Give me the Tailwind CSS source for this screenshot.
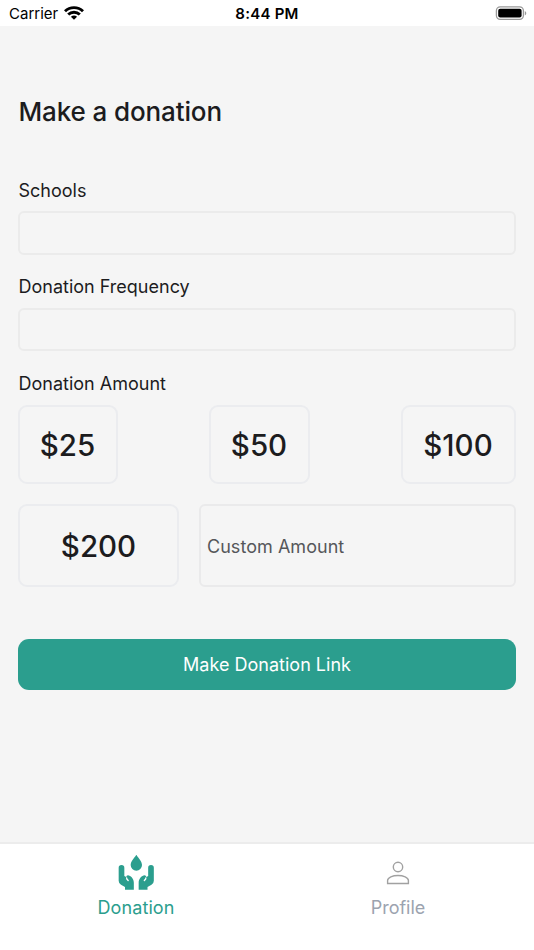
<!DOCTYPE html>
<html lang="en">
<head>
<meta charset="utf-8">
<title>Make a donation</title>
<script src="https://cdn.jsdelivr.net/npm/@tailwindcss/browser@4"></script>
</head>
<body class="bg-[#f5f5f5]">
<div class="flex h-[950px] w-[534px] flex-col overflow-hidden bg-[#f5f5f5] font-['Inter',sans-serif] text-[#1c1c1e]">
  <header class="grid h-[26px] shrink-0 grid-cols-3 items-center bg-white pl-[9px] pr-[7px] text-[15px] leading-[26px] text-black">
    <div class="flex items-center gap-[6px]">
      <span class="pt-px tracking-[0px]">Carrier</span>
      <svg class="mb-px h-[14px] w-5" viewBox="0 0 20 14" fill="none" stroke="#000" stroke-width="2.9"><path d="M1 5.2a13 13 0 0 1 18 0M4.2 8.5a8.4 8.4 0 0 1 11.6 0"/><path d="M10 13.8 6.9 10.8a4.6 4.6 0 0 1 6.2 0z" fill="#000" stroke="none"/></svg>
    </div>
    <div class="pr-[2px] pt-px text-center font-semibold tracking-[0.25px]">8:44 PM</div>
    <svg class="mb-px h-[14px] w-[32px] justify-self-end" viewBox="0 0 32 14"><rect x="1.4" y=".9" width="27" height="12.4" rx="3.8" fill="none" stroke="#999" stroke-width="1.3"/><rect x="3.2" y="2.7" width="23.4" height="8.8" rx="2" fill="#000"/><path d="M29.8 5v4.4c2-.8 2-3.6 0-4.4z" fill="#999"/></svg>
  </header>
  <main class="flex flex-1 flex-col px-[18px] pt-[65px] text-[18px]">
    <h1 class="h-10 pl-[0.5px] pt-px text-[26px] font-medium leading-10 tracking-[-0.12px]">Make a donation</h1>
    <label class="mt-[48px] h-6 pl-[0.5px] leading-6 tracking-[0px]">Schools</label>
    <div class="mt-[8px] h-[44px] w-[498px] rounded-[6px] border-2 border-[#ebebeb]"></div>
    <label class="mt-[20px] h-6 pl-[0.5px] leading-6 tracking-[0px]">Donation Frequency</label>
    <div class="mt-[9px] h-[43px] w-[498px] rounded-[6px] border-2 border-[#ebebeb]"></div>
    <label class="mt-[21px] h-6 pl-[0.5px] leading-6 tracking-[0px]">Donation Amount</label>
    <div class="mt-[9px] flex h-[79px] justify-between text-[29.5px] font-medium">
      <div class="flex w-[100px] items-center justify-center rounded-[9px] border-2 border-[#ebecef] pr-px pt-px">$25</div>
      <div class="flex w-[101px] items-center justify-center rounded-[9px] border-2 border-[#ebecef] pr-px pt-px">$50</div>
      <div class="flex w-[115px] items-center justify-center rounded-[9px] border-2 border-[#ebecef] pr-px pt-px">$100</div>
    </div>
    <div class="mt-[20px] flex h-[83px] gap-5">
      <div class="flex w-[161px] items-center justify-center rounded-[9px] border-2 border-[#ebecef] pt-px text-[29.5px] font-medium">$200</div>
      <div class="flex flex-1 items-center rounded-[6px] border-2 border-[#eaeaeb] pl-[6px] pt-px tracking-[0.04px] text-[#55575a]">Custom Amount</div>
    </div>
    <button class="mt-[52px] h-[51px] rounded-[11px] bg-[#2b9e8e] text-[18px] tracking-[0.01px] text-white">Make Donation Link</button>
  </main>
  <nav class="grid h-[108px] shrink-0 grid-cols-2 border-t-2 border-[#ececec] bg-white px-[5px] text-[18px]">
    <div class="flex flex-col items-center pt-[11px] text-[#2b9e8e]">
      <svg class="h-9 w-9" viewBox="25 32 108 108" fill="currentColor"><path d="M80 31C75 40 63 51 63 62a17 17 0 0 0 34 0C97 51 85 40 80 31z"/><g id="hand"><path d="M27 70.500a8.500 8.500 0 0 1 17 0V95l5.500 3q1-6.500 8.500-4.500c8 3 14.500 12 14.500 21.500v21H46v-8l-12-7q-7-4-7-12z"/><path d="m51 101 .5 3 4 4.500" fill="none" stroke="#fff" stroke-width="4" stroke-linecap="round" stroke-linejoin="round"/></g><use href="#hand" transform="matrix(-1 0 0 1 159.500 0)"/></svg>
      <span class="mt-[5px] leading-6 tracking-[0.1px]">Donation</span>
    </div>
    <div class="flex flex-col items-center pt-[11px] text-[#9ca3af]">
      <svg class="h-9 w-9" viewBox="0 0 36 36" fill="none" stroke="#a1a1a1" stroke-width="1.4"><circle cx="18" cy="12" r="4.7"/><path d="M7.600 28.500v-3c0-3 5.100-5 10.400-5s10.400 2 10.400 5v3z"/></svg>
      <span class="mt-[5px] leading-6 tracking-[0px]">Profile</span>
    </div>
  </nav>
</div>
</body>
</html>
